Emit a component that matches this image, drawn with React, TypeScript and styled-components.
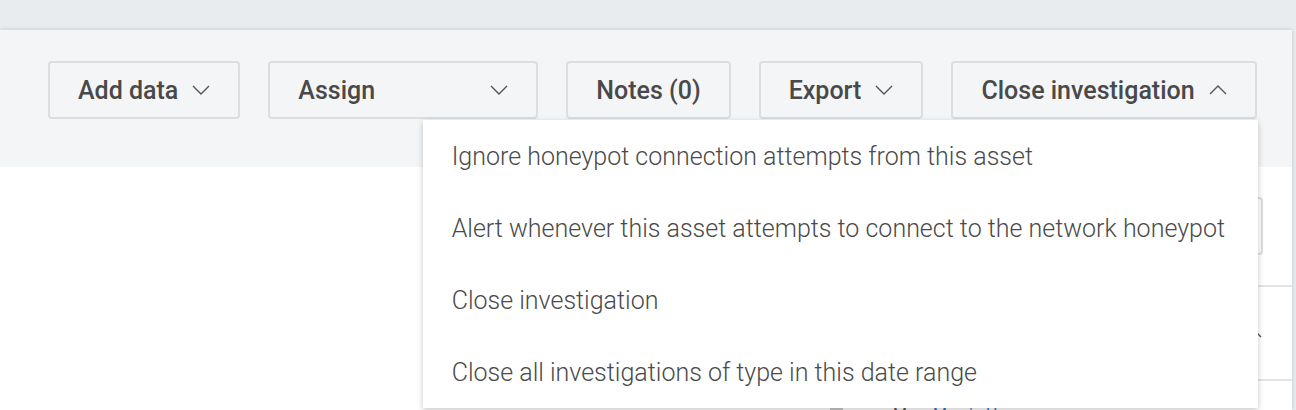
import React from "react";
import styled, { createGlobalStyle } from "styled-components";

const GlobalStyle = createGlobalStyle`
  html, body {
    margin: 0;
    padding: 0;
    background: #e8ecef;
    font-family: Roboto, "Liberation Sans", sans-serif;
    overflow: hidden;
  }
`;

const Page = styled.div`
  height: 410px;
  padding: 30px 4px 0 0;
  box-sizing: border-box;
`;

const Card = styled.div`
  height: 100%;
  background: #ffffff;
  box-shadow: 0 0 4px rgba(0, 0, 0, 0.18);
  display: flex;
  flex-direction: column;
`;

const Toolbar = styled.div`
  height: 137px;
  flex-shrink: 0;
  box-sizing: border-box;
  background: #f4f5f7;
  padding: 31px 0 0 48px;
  display: flex;
  align-items: flex-start;
  gap: 28px;
`;

const ButtonWrap = styled.div`
  position: relative;
`;

const ActionButton = styled.button<{ $width?: number }>`
  height: 58px;
  width: ${(p) => (p.$width ? `${p.$width}px` : "auto")};
  box-sizing: border-box;
  padding: 0 28px 0 28px;
  display: flex;
  align-items: center;
  justify-content: space-between;
  gap: 14px;
  background: #f4f5f7;
  border: 2px solid #dcdddf;
  border-radius: 4px;
  font-family: Roboto, "Liberation Sans", sans-serif;
  font-size: 25px;
  font-weight: 500;
  color: #494949;
  white-space: nowrap;
  cursor: pointer;
`;

const Menu = styled.ul`
  position: absolute;
  top: 59px;
  right: -1px;
  width: 835px;
  margin: 0;
  padding: 0;
  list-style: none;
  background: #ffffff;
  box-shadow: 0 2px 6px rgba(0, 0, 0, 0.22);
  z-index: 10;
`;

const MenuItem = styled.li`
  height: 72px;
  display: flex;
  align-items: center;
  padding-left: 29px;
  font-size: 25px;
  font-weight: 300;
  color: #4a4a4a;
  white-space: nowrap;
`;

const Body = styled.div`
  flex: 1;
  display: flex;
  justify-content: flex-end;
  overflow: hidden;
`;

const SidePanel = styled.div`
  width: 462px;
  padding-top: 30px;
  display: flex;
  flex-direction: column;
`;

const SelectBox = styled.div`
  height: 58px;
  flex-shrink: 0;
  margin: 0 29px 0 40px;
  border: 2px solid #dcdddf;
  border-radius: 4px;
  box-sizing: border-box;
`;

const Row = styled.div<{ $h: number }>`
  height: ${(p) => p.$h}px;
  flex-shrink: 0;
  box-sizing: border-box;
  border-top: 2px solid #e3e4e6;
  display: flex;
  align-items: center;
  justify-content: flex-end;
  padding-right: 30px;
  color: #555;
`;

const PersonRow = styled.div`
  flex: 1;
  display: flex;
  align-items: flex-start;
  align-self: flex-start;
  gap: 50px;
  padding-top: 24px;
  font-size: 16px;
  color: #555;
`;

const Check = styled.span`
  width: 13px;
  height: 13px;
  margin-top: 1px;
  background: #c8c8c8;
`;

const Link = styled.span`
  margin-left: 26px;
  color: #2f72c2;
  text-decoration: underline;
`;

const Chevron = ({ up }: { up?: boolean }) => (
  <svg width="18" height="10" viewBox="0 0 18 10" fill="none">
    <polyline
      points={up ? "1,9 9,1 17,9" : "1,1 9,9 17,1"}
      stroke="#555"
      strokeWidth="1.4"
    />
  </svg>
);

const items = [
  "Ignore honeypot connection attempts from this asset",
  "Alert whenever this asset attempts to connect to the network honeypot",
  "Close investigation",
  "Close all investigations of type in this date range",
];

const App = () => {
  return (
    <Page>
      <GlobalStyle />
      <Card>
        <Toolbar>
          <ButtonWrap>
            <ActionButton>
              Add data <Chevron />
            </ActionButton>
          </ButtonWrap>
          <ButtonWrap>
            <ActionButton $width={270}>
              Assign <Chevron />
            </ActionButton>
          </ButtonWrap>
          <ButtonWrap>
            <ActionButton>Notes (0)</ActionButton>
          </ButtonWrap>
          <ButtonWrap>
            <ActionButton>
              Export <Chevron />
            </ActionButton>
          </ButtonWrap>
          <ButtonWrap>
            <ActionButton>
              Close investigation <Chevron up />
            </ActionButton>
            <Menu>
              {items.map((t) => (
                <MenuItem key={t}>{t}</MenuItem>
              ))}
            </Menu>
          </ButtonWrap>
        </Toolbar>
        <Body>
          <SidePanel>
            <SelectBox />
            <Row $h={94} style={{ marginTop: 30 }}>
              <Chevron up />
            </Row>
            <Row $h={40}>
              <PersonRow>
                <Check />
                <span>
                  M<Link>Mercio Hey</Link>
                </span>
              </PersonRow>
            </Row>
          </SidePanel>
        </Body>
      </Card>
    </Page>
  );
};

export default App;
